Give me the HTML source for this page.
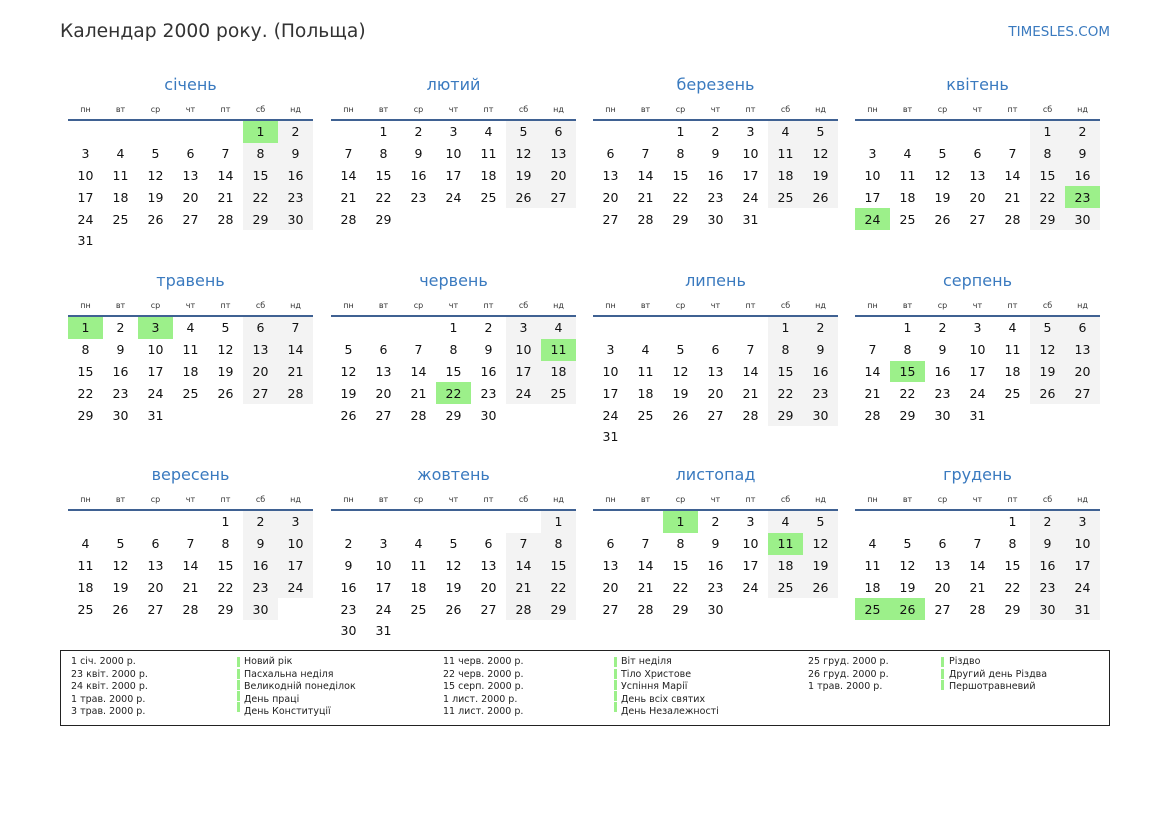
<!DOCTYPE html><html><head><meta charset="utf-8"><style>
body{margin:0;width:1169px;height:827px;background:#fff;font-family:"DejaVu Sans","Liberation Sans",sans-serif;position:relative;overflow:hidden;color:#111}
.t{position:absolute;left:60px;top:21px;font-size:18.7px;color:#333}
.s{position:absolute;right:59px;top:24px;font-size:13.5px;color:#3a7abf}
.m{position:absolute;width:245px}
.m .n{height:20px;line-height:20px;text-align:center;font-size:16px;color:#3a7abf}
table{border-collapse:collapse;margin-top:5px}
th{width:35px;height:19px;font-size:8px;font-weight:normal;color:#333;border-bottom:2px solid #3f6192;padding:0}
td{width:35px;height:21.8px;text-align:center;font-size:12.5px;padding:0}
td.w{background:#f3f3f3}td.h{background:#9cf08a}
.lg{position:absolute;left:60px;top:650px;width:1048px;height:74px;border:1px solid #222;font-size:9.5px;color:#222}
.c{position:absolute;top:5px;line-height:12.6px}
.b{position:absolute;top:5px;width:3px}
.b i{display:block;height:10px;margin:1.3px 0;background:#9cf08a}
</style></head><body>
<div class="t">Календар 2000 року. (Польща)</div>
<div class="s">TIMESLES.COM</div>

<div class="m" style="left:68px;top:75px"><div class="n">січень</div><table><tr><th>пн</th><th>вт</th><th>ср</th><th>чт</th><th>пт</th><th>сб</th><th>нд</th></tr>
<tr><td></td><td></td><td></td><td></td><td></td><td class="h">1</td><td class="w">2</td></tr>
<tr><td>3</td><td>4</td><td>5</td><td>6</td><td>7</td><td class="w">8</td><td class="w">9</td></tr>
<tr><td>10</td><td>11</td><td>12</td><td>13</td><td>14</td><td class="w">15</td><td class="w">16</td></tr>
<tr><td>17</td><td>18</td><td>19</td><td>20</td><td>21</td><td class="w">22</td><td class="w">23</td></tr>
<tr><td>24</td><td>25</td><td>26</td><td>27</td><td>28</td><td class="w">29</td><td class="w">30</td></tr>
<tr><td>31</td><td></td><td></td><td></td><td></td><td></td><td></td></tr></table></div>

<div class="m" style="left:331px;top:75px"><div class="n">лютий</div><table><tr><th>пн</th><th>вт</th><th>ср</th><th>чт</th><th>пт</th><th>сб</th><th>нд</th></tr>
<tr><td></td><td>1</td><td>2</td><td>3</td><td>4</td><td class="w">5</td><td class="w">6</td></tr>
<tr><td>7</td><td>8</td><td>9</td><td>10</td><td>11</td><td class="w">12</td><td class="w">13</td></tr>
<tr><td>14</td><td>15</td><td>16</td><td>17</td><td>18</td><td class="w">19</td><td class="w">20</td></tr>
<tr><td>21</td><td>22</td><td>23</td><td>24</td><td>25</td><td class="w">26</td><td class="w">27</td></tr>
<tr><td>28</td><td>29</td><td></td><td></td><td></td><td></td><td></td></tr></table></div>

<div class="m" style="left:593px;top:75px"><div class="n">березень</div><table><tr><th>пн</th><th>вт</th><th>ср</th><th>чт</th><th>пт</th><th>сб</th><th>нд</th></tr>
<tr><td></td><td></td><td>1</td><td>2</td><td>3</td><td class="w">4</td><td class="w">5</td></tr>
<tr><td>6</td><td>7</td><td>8</td><td>9</td><td>10</td><td class="w">11</td><td class="w">12</td></tr>
<tr><td>13</td><td>14</td><td>15</td><td>16</td><td>17</td><td class="w">18</td><td class="w">19</td></tr>
<tr><td>20</td><td>21</td><td>22</td><td>23</td><td>24</td><td class="w">25</td><td class="w">26</td></tr>
<tr><td>27</td><td>28</td><td>29</td><td>30</td><td>31</td><td></td><td></td></tr></table></div>

<div class="m" style="left:855px;top:75px"><div class="n">квітень</div><table><tr><th>пн</th><th>вт</th><th>ср</th><th>чт</th><th>пт</th><th>сб</th><th>нд</th></tr>
<tr><td></td><td></td><td></td><td></td><td></td><td class="w">1</td><td class="w">2</td></tr>
<tr><td>3</td><td>4</td><td>5</td><td>6</td><td>7</td><td class="w">8</td><td class="w">9</td></tr>
<tr><td>10</td><td>11</td><td>12</td><td>13</td><td>14</td><td class="w">15</td><td class="w">16</td></tr>
<tr><td>17</td><td>18</td><td>19</td><td>20</td><td>21</td><td class="w">22</td><td class="h">23</td></tr>
<tr><td class="h">24</td><td>25</td><td>26</td><td>27</td><td>28</td><td class="w">29</td><td class="w">30</td></tr></table></div>

<div class="m" style="left:68px;top:271px"><div class="n">травень</div><table><tr><th>пн</th><th>вт</th><th>ср</th><th>чт</th><th>пт</th><th>сб</th><th>нд</th></tr>
<tr><td class="h">1</td><td>2</td><td class="h">3</td><td>4</td><td>5</td><td class="w">6</td><td class="w">7</td></tr>
<tr><td>8</td><td>9</td><td>10</td><td>11</td><td>12</td><td class="w">13</td><td class="w">14</td></tr>
<tr><td>15</td><td>16</td><td>17</td><td>18</td><td>19</td><td class="w">20</td><td class="w">21</td></tr>
<tr><td>22</td><td>23</td><td>24</td><td>25</td><td>26</td><td class="w">27</td><td class="w">28</td></tr>
<tr><td>29</td><td>30</td><td>31</td><td></td><td></td><td></td><td></td></tr></table></div>

<div class="m" style="left:331px;top:271px"><div class="n">червень</div><table><tr><th>пн</th><th>вт</th><th>ср</th><th>чт</th><th>пт</th><th>сб</th><th>нд</th></tr>
<tr><td></td><td></td><td></td><td>1</td><td>2</td><td class="w">3</td><td class="w">4</td></tr>
<tr><td>5</td><td>6</td><td>7</td><td>8</td><td>9</td><td class="w">10</td><td class="h">11</td></tr>
<tr><td>12</td><td>13</td><td>14</td><td>15</td><td>16</td><td class="w">17</td><td class="w">18</td></tr>
<tr><td>19</td><td>20</td><td>21</td><td class="h">22</td><td>23</td><td class="w">24</td><td class="w">25</td></tr>
<tr><td>26</td><td>27</td><td>28</td><td>29</td><td>30</td><td></td><td></td></tr></table></div>

<div class="m" style="left:593px;top:271px"><div class="n">липень</div><table><tr><th>пн</th><th>вт</th><th>ср</th><th>чт</th><th>пт</th><th>сб</th><th>нд</th></tr>
<tr><td></td><td></td><td></td><td></td><td></td><td class="w">1</td><td class="w">2</td></tr>
<tr><td>3</td><td>4</td><td>5</td><td>6</td><td>7</td><td class="w">8</td><td class="w">9</td></tr>
<tr><td>10</td><td>11</td><td>12</td><td>13</td><td>14</td><td class="w">15</td><td class="w">16</td></tr>
<tr><td>17</td><td>18</td><td>19</td><td>20</td><td>21</td><td class="w">22</td><td class="w">23</td></tr>
<tr><td>24</td><td>25</td><td>26</td><td>27</td><td>28</td><td class="w">29</td><td class="w">30</td></tr>
<tr><td>31</td><td></td><td></td><td></td><td></td><td></td><td></td></tr></table></div>

<div class="m" style="left:855px;top:271px"><div class="n">серпень</div><table><tr><th>пн</th><th>вт</th><th>ср</th><th>чт</th><th>пт</th><th>сб</th><th>нд</th></tr>
<tr><td></td><td>1</td><td>2</td><td>3</td><td>4</td><td class="w">5</td><td class="w">6</td></tr>
<tr><td>7</td><td>8</td><td>9</td><td>10</td><td>11</td><td class="w">12</td><td class="w">13</td></tr>
<tr><td>14</td><td class="h">15</td><td>16</td><td>17</td><td>18</td><td class="w">19</td><td class="w">20</td></tr>
<tr><td>21</td><td>22</td><td>23</td><td>24</td><td>25</td><td class="w">26</td><td class="w">27</td></tr>
<tr><td>28</td><td>29</td><td>30</td><td>31</td><td></td><td></td><td></td></tr></table></div>

<div class="m" style="left:68px;top:465px"><div class="n">вересень</div><table><tr><th>пн</th><th>вт</th><th>ср</th><th>чт</th><th>пт</th><th>сб</th><th>нд</th></tr>
<tr><td></td><td></td><td></td><td></td><td>1</td><td class="w">2</td><td class="w">3</td></tr>
<tr><td>4</td><td>5</td><td>6</td><td>7</td><td>8</td><td class="w">9</td><td class="w">10</td></tr>
<tr><td>11</td><td>12</td><td>13</td><td>14</td><td>15</td><td class="w">16</td><td class="w">17</td></tr>
<tr><td>18</td><td>19</td><td>20</td><td>21</td><td>22</td><td class="w">23</td><td class="w">24</td></tr>
<tr><td>25</td><td>26</td><td>27</td><td>28</td><td>29</td><td class="w">30</td><td></td></tr></table></div>

<div class="m" style="left:331px;top:465px"><div class="n">жовтень</div><table><tr><th>пн</th><th>вт</th><th>ср</th><th>чт</th><th>пт</th><th>сб</th><th>нд</th></tr>
<tr><td></td><td></td><td></td><td></td><td></td><td></td><td class="w">1</td></tr>
<tr><td>2</td><td>3</td><td>4</td><td>5</td><td>6</td><td class="w">7</td><td class="w">8</td></tr>
<tr><td>9</td><td>10</td><td>11</td><td>12</td><td>13</td><td class="w">14</td><td class="w">15</td></tr>
<tr><td>16</td><td>17</td><td>18</td><td>19</td><td>20</td><td class="w">21</td><td class="w">22</td></tr>
<tr><td>23</td><td>24</td><td>25</td><td>26</td><td>27</td><td class="w">28</td><td class="w">29</td></tr>
<tr><td>30</td><td>31</td><td></td><td></td><td></td><td></td><td></td></tr></table></div>

<div class="m" style="left:593px;top:465px"><div class="n">листопад</div><table><tr><th>пн</th><th>вт</th><th>ср</th><th>чт</th><th>пт</th><th>сб</th><th>нд</th></tr>
<tr><td></td><td></td><td class="h">1</td><td>2</td><td>3</td><td class="w">4</td><td class="w">5</td></tr>
<tr><td>6</td><td>7</td><td>8</td><td>9</td><td>10</td><td class="h">11</td><td class="w">12</td></tr>
<tr><td>13</td><td>14</td><td>15</td><td>16</td><td>17</td><td class="w">18</td><td class="w">19</td></tr>
<tr><td>20</td><td>21</td><td>22</td><td>23</td><td>24</td><td class="w">25</td><td class="w">26</td></tr>
<tr><td>27</td><td>28</td><td>29</td><td>30</td><td></td><td></td><td></td></tr></table></div>

<div class="m" style="left:855px;top:465px"><div class="n">грудень</div><table><tr><th>пн</th><th>вт</th><th>ср</th><th>чт</th><th>пт</th><th>сб</th><th>нд</th></tr>
<tr><td></td><td></td><td></td><td></td><td>1</td><td class="w">2</td><td class="w">3</td></tr>
<tr><td>4</td><td>5</td><td>6</td><td>7</td><td>8</td><td class="w">9</td><td class="w">10</td></tr>
<tr><td>11</td><td>12</td><td>13</td><td>14</td><td>15</td><td class="w">16</td><td class="w">17</td></tr>
<tr><td>18</td><td>19</td><td>20</td><td>21</td><td>22</td><td class="w">23</td><td class="w">24</td></tr>
<tr><td class="h">25</td><td class="h">26</td><td>27</td><td>28</td><td>29</td><td class="w">30</td><td class="w">31</td></tr></table></div>

<div class="lg">
<div class="c" style="left:10px">1 січ. 2000 р.<br>23 квіт. 2000 р.<br>24 квіт. 2000 р.<br>1 трав. 2000 р.<br>3 трав. 2000 р.</div>
<div class="b" style="left:176px"><i></i><i></i><i></i><i></i><i></i></div>
<div class="c" style="left:183px">Новий рік<br>Пасхальна неділя<br>Великодній понеділок<br>День праці<br>День Конституції</div>
<div class="c" style="left:382px">11 черв. 2000 р.<br>22 черв. 2000 р.<br>15 серп. 2000 р.<br>1 лист. 2000 р.<br>11 лист. 2000 р.</div>
<div class="b" style="left:553px"><i></i><i></i><i></i><i></i><i></i></div>
<div class="c" style="left:560px">Віт неділя<br>Тіло Христове<br>Успіння Марії<br>День всіх святих<br>День Незалежності</div>
<div class="c" style="left:747px">25 груд. 2000 р.<br>26 груд. 2000 р.<br>1 трав. 2000 р.</div>
<div class="b" style="left:880px"><i></i><i></i><i></i></div>
<div class="c" style="left:888px">Різдво<br>Другий день Різдва<br>Першотравневий</div>
</div>
</body></html>
